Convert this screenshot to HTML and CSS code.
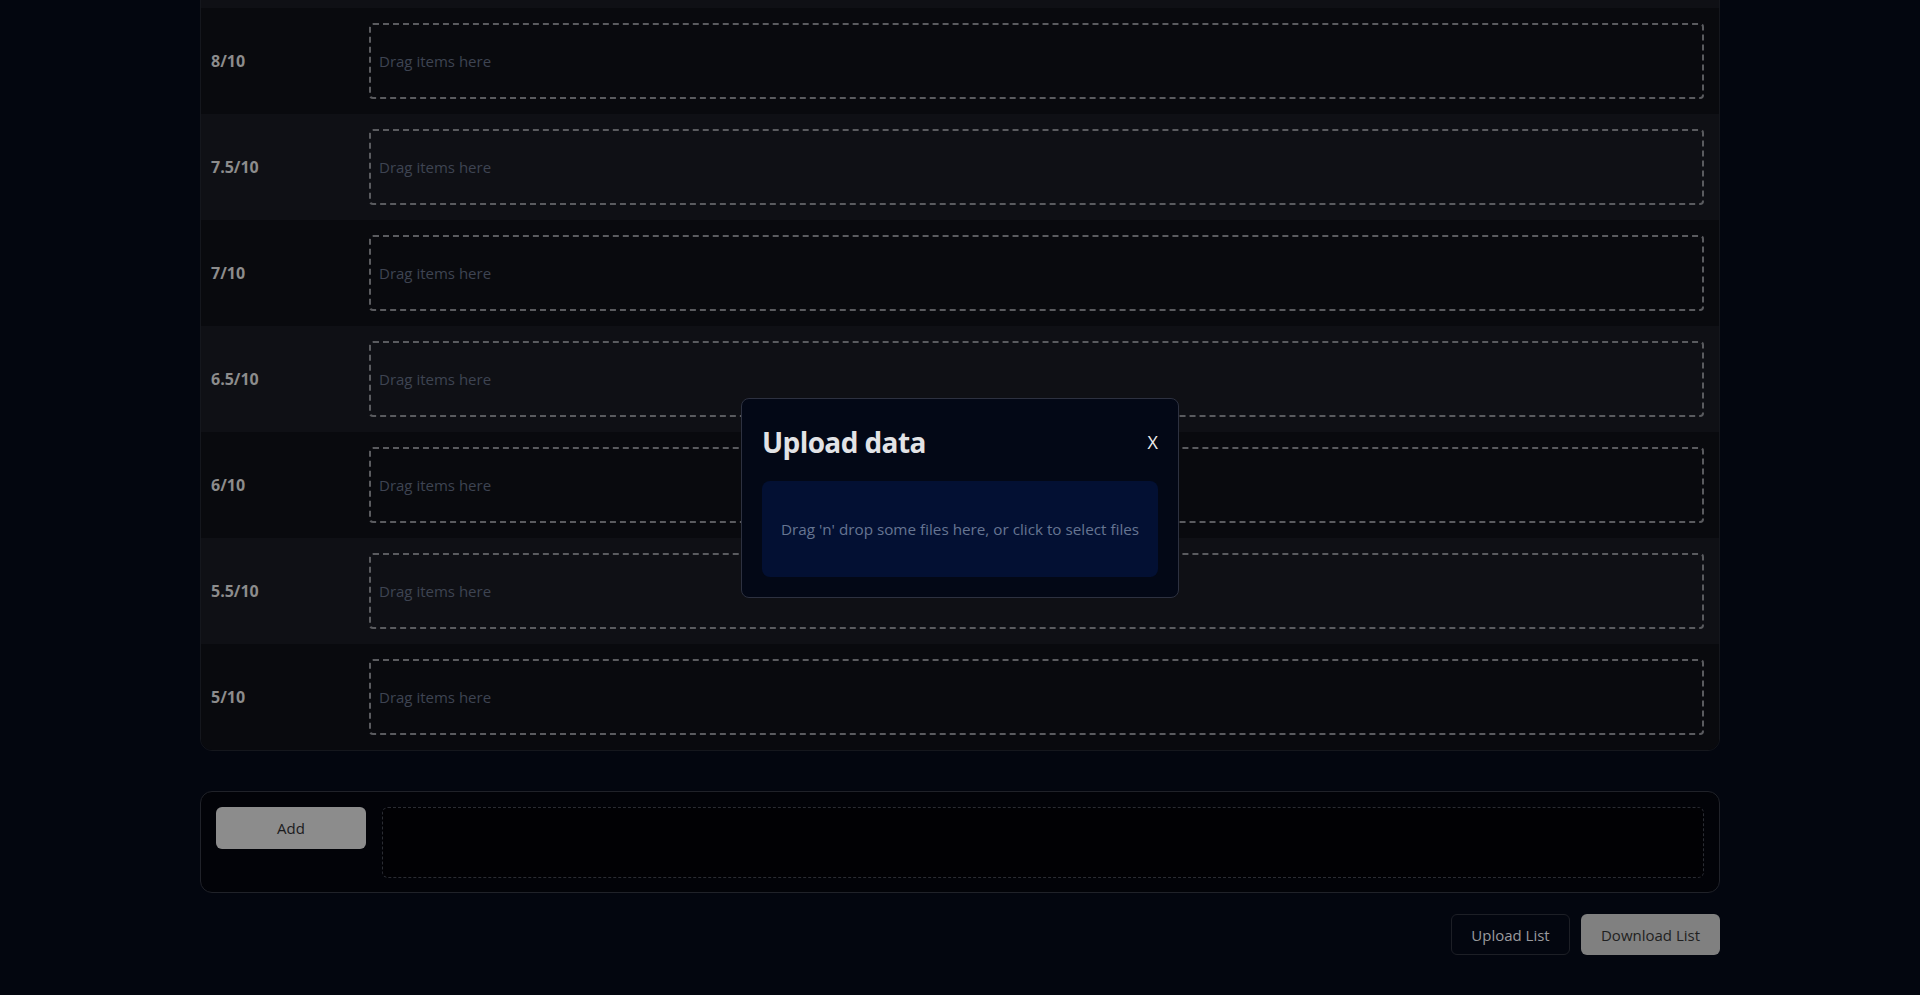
FILE: index.html
```html
<!DOCTYPE html>
<html lang="en">
<head>
<meta charset="utf-8">
<title>Tier list</title>
<link rel="stylesheet" href="styles.css">
</head>
<body>
<main class="page">
  <section class="tier-list">
    <div class="tier tier-partial"></div>
    <div class="tier"><div class="tier-label">8/10</div><div class="tier-drop">Drag items here</div></div>
    <div class="tier"><div class="tier-label">7.5/10</div><div class="tier-drop">Drag items here</div></div>
    <div class="tier"><div class="tier-label">7/10</div><div class="tier-drop">Drag items here</div></div>
    <div class="tier"><div class="tier-label">6.5/10</div><div class="tier-drop">Drag items here</div></div>
    <div class="tier"><div class="tier-label">6/10</div><div class="tier-drop">Drag items here</div></div>
    <div class="tier"><div class="tier-label">5.5/10</div><div class="tier-drop">Drag items here</div></div>
    <div class="tier"><div class="tier-label">5/10</div><div class="tier-drop">Drag items here</div></div>
  </section>

  <section class="add-panel">
    <button class="btn btn-add">Add</button>
    <div class="pool"></div>
  </section>

  <div class="actions">
    <button class="btn btn-outline">Upload List</button>
    <button class="btn btn-solid">Download List</button>
  </div>
</main>

<div class="overlay">
  <div class="modal">
    <div class="modal-head">
      <h2 class="modal-title">Upload data</h2>
      <span class="modal-close">X</span>
    </div>
    <div class="dropzone">Drag 'n' drop some files here, or click to select files</div>
  </div>
</div>
</body>
</html>
```

FILE: styles.css
```css
* { box-sizing: border-box; }

html, body {
  margin: 0;
  height: 100%;
  overflow: hidden;
}

body {
  background: #03060f;
  font-family: "Open Sans", "Noto Sans", sans-serif;
  font-size: 15px;
  color: #9a9a9a;
}

.page {
  width: 1520px;
  margin: 0 auto;
}

.tier-list {
  margin-top: -13px;
  border: 1px solid #15171d;
  border-radius: 12px;
  overflow: hidden;
}

.tier {
  display: flex;
  align-items: center;
  height: 106px;
  padding: 15px 15px 15px 10px;
  background: #090a0e;
}

.tier:nth-child(odd) {
  background: #0f1015;
}

.tier-partial {
  height: 20px;
  padding: 0;
}

.tier-label {
  width: 158px;
  flex: none;
  font-size: 16px;
  font-weight: 700;
  color: #8c8c8c;
}

.tier-drop {
  flex: 1;
  height: 76px;
  display: flex;
  align-items: center;
  padding-left: 8px;
  border: 2px dashed #5a5b5f;
  border-radius: 4px;
  color: #3e4452;
}

.add-panel {
  margin-top: 40px;
  display: flex;
  align-items: flex-start;
  gap: 16px;
  padding: 15px 15px 14px 15px;
  border: 1px solid #202229;
  border-radius: 12px;
  background: #020308;
}

.pool {
  flex: 1;
  height: 71px;
  border: 1px dashed #2a2c33;
  border-radius: 6px;
  background: #010104;
}

.btn {
  font-family: inherit;
  font-size: 15px;
  border-radius: 6px;
  cursor: pointer;
  padding: 0 16px;
  white-space: nowrap;
}

.btn-add {
  width: 150px;
  height: 42px;
  border: none;
  background: #8c8c8c;
  color: #1b1b1d;
}

.actions {
  margin-top: 21px;
  display: flex;
  justify-content: flex-end;
  gap: 11px;
}

.btn-outline {
  height: 41px;
  width: 119px;
  border: 1px solid #1d1f26;
  background: #03060f;
  color: #9a9a9e;
}

.btn-solid {
  height: 41px;
  width: 139px;
  border: none;
  background: #808080;
  color: #1f1f21;
}

.overlay {
  position: fixed;
  inset: 0;
  display: flex;
  align-items: center;
  justify-content: center;
}

.modal {
  width: 438px;
  height: 200px;
  padding: 20px;
  background: #030816;
  border: 1px solid #2d3140;
  border-radius: 8px;
}

.modal-head {
  display: flex;
  align-items: center;
  justify-content: space-between;
  padding-top: 6px;
  margin-bottom: 22px;
}

.modal-title {
  margin: 0;
  font-size: 28px;
  line-height: 34px;
  font-weight: 700;
  letter-spacing: -0.6px;
  color: #e2e3e6;
}

.modal-close {
  font-size: 18px;
  color: #eeeeee;
  cursor: pointer;
}

.dropzone {
  height: 96px;
  display: flex;
  align-items: center;
  justify-content: center;
  padding: 0 16px;
  background: #031033;
  border-radius: 8px;
  color: #667592;
  font-size: 15.25px;
}
```
